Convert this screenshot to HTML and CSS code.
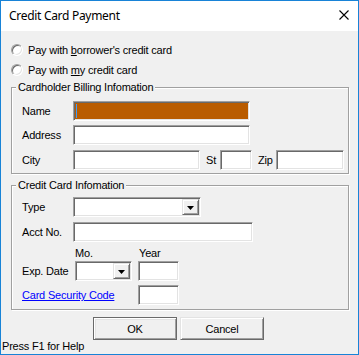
FILE: index.html
```html
<!DOCTYPE html>
<html>
<head>
<meta charset="utf-8">
<link rel="stylesheet" href="styles.css">
</head>
<body>
<div class="win">
  <div class="titlebar">
    <span class="title">Credit Card Payment</span>
    <svg class="close" width="10" height="10" viewBox="0 0 10 10"><path d="M0.5 0.5 L9.5 9.5 M9.5 0.5 L0.5 9.5" stroke="#000" stroke-width="1.1" fill="none"/></svg>
  </div>
  <div class="content">
    <div class="radio-row"><span class="radio"></span><span>Pay with <u>b</u>orrower's credit card</span></div>
    <div class="radio-row"><span class="radio"></span><span>Pay with <u>m</u>y credit card</span></div>

    <div class="group g1">
      <div class="legend">Cardholder Billing Infomation</div>
      <div class="row r-name"><span class="lbl">Name</span><div class="field w-name selected"><span class="caret"></span></div></div>
      <div class="row r-addr"><span class="lbl">Address</span><div class="field w-name"></div></div>
      <div class="row r-city"><span class="lbl">City</span><div class="field w-city"></div><span class="lbl-st">St</span><div class="field w-st"></div><span class="lbl-zip">Zip</span><div class="field w-zip"></div></div>
    </div>

    <div class="group g2">
      <div class="legend">Credit Card Infomation</div>
      <div class="row r-type"><span class="lbl">Type</span><div class="field select w-type"><span class="ddbtn"><svg width="7" height="4" viewBox="0 0 7 4"><polygon points="0,0 7,0 3.5,4" fill="#000"/></svg></span></div></div>
      <div class="row r-acct"><span class="lbl">Acct No.</span><div class="field w-acct"></div></div>
      <div class="sublabels"><span class="lbl-mo">Mo.</span><span>Year</span></div>
      <div class="row r-exp"><span class="lbl-exp">Exp. Date</span><div class="field select w-mo"><span class="ddbtn"><svg width="7" height="4" viewBox="0 0 7 4"><polygon points="0,0 7,0 3.5,4" fill="#000"/></svg></span></div><div class="field w-year"></div></div>
      <div class="row r-csc"><span class="lbl-csc link">Card Security Code</span><div class="field w-year2"></div></div>
    </div>

    <div class="buttons"><button class="btn default">OK</button><button class="btn cancel">Cancel</button></div>
    <div class="status">Press F1 for Help</div>
  </div>
</div>
</body>
</html>
```
FILE: styles.css
```css
html, body {
  margin: 0;
  padding: 0;
  background: #fff;
}
.win {
  box-sizing: border-box;
  width: 359px;
  height: 355px;
  border: 1px solid #1883d7;
  overflow: hidden;
  font-family: "Liberation Sans", Arial, sans-serif;
  font-size: 11px;
  letter-spacing: -0.2px;
  color: #000;
}
.titlebar {
  height: 30px;
  background: #fff;
  display: flex;
  justify-content: space-between;
  align-items: flex-start;
}
.title {
  font-family: "Noto Sans", sans-serif;
  font-size: 12px;
  letter-spacing: -0.3px;
  line-height: 16px;
  margin: 7px 0 0 8px;
}
.close {
  display: block;
  margin: 9px 9px 0 0;
}
.content {
  height: 323px;
  background: #f0f0f0;
  padding-top: 9px;
  box-sizing: border-box;
  overflow: hidden;
}
.radio-row {
  height: 20px;
  display: flex;
  align-items: center;
  padding-left: 10px;
}
.radio {
  box-sizing: border-box;
  width: 12px;
  height: 12px;
  border-radius: 50%;
  background: #fff;
  border: 1px solid;
  border-color: #a0a0a0 #fff #fff #a0a0a0;
  box-shadow: inset 1px 1px 0 #696969, inset -1px -1px 0 #e3e3e3;
  margin-right: 5px;
}
.group {
  box-sizing: border-box;
  margin-left: 10px;
  width: 338px;
  border: 1px solid #a0a0a0;
  box-shadow: inset 1px 1px 0 #fff, 1px 1px 0 #fff;
}
.g1 { margin-top: 7px; height: 87px; }
.g2 { margin-top: 11px; height: 125px; }
.legend {
  display: table;
  margin: -7px 0 0 4px;
  padding: 0 2px;
  line-height: 13px;
  height: 13px;
  background: #f0f0f0;
}
.row {
  height: 20px;
  display: flex;
  align-items: center;
  padding-left: 10px;
}
.lbl { width: 51px; }
.r-name { margin-top: 7px; }
.r-addr { margin-top: 4px; }
.r-city { margin-top: 5px; }
.r-type { margin-top: 5px; }
.r-acct { margin-top: 5px; }
.field {
  box-sizing: border-box;
  height: 20px;
  background: #fff;
  border: 1px solid;
  border-color: #a0a0a0 #fff #fff #a0a0a0;
  box-shadow: inset 1px 1px 0 #696969, inset -1px -1px 0 #e3e3e3;
}
.selected {
  background: #b95c00;
  display: flex;
  align-items: center;
  padding-left: 2px;
}
.caret {
  width: 1px;
  height: 14px;
  background: #3a9cff;
}
.w-name { width: 177px; }
.w-city { width: 127px; }
.lbl-st { width: 14px; margin-left: 6px; }
.w-st { width: 32px; }
.lbl-zip { width: 18px; margin-left: 6px; }
.w-zip { width: 68px; }
.select {
  display: flex;
  justify-content: flex-end;
  padding: 1px;
}
.w-type { width: 128px; }
.ddbtn {
  box-sizing: border-box;
  width: 17px;
  height: 16px;
  background: #f0f0f0;
  border: 1px solid;
  border-color: #e3e3e3 #696969 #696969 #e3e3e3;
  box-shadow: inset 1px 1px 0 #fff, inset -1px -1px 0 #a0a0a0;
  display: flex;
  align-items: center;
  justify-content: center;
}
.ddbtn svg { display: block; margin-top: 1px; }
.w-acct { width: 180px; }
.sublabels {
  margin-top: 4px;
  height: 14px;
  line-height: 14px;
  display: flex;
  padding-left: 63px;
}
.lbl-mo { width: 64px; }
.r-exp { margin-top: 1px; }
.lbl-exp { width: 53px; }
.w-mo { width: 57px; }
.w-year { width: 41px; margin-left: 6px; }
.r-csc { margin-top: 4px; }
.lbl-csc { width: 116px; }
.w-year2 { width: 41px; }
.link {
  color: #0000ff;
  text-decoration: underline;
}
.buttons {
  display: flex;
  margin-top: 7px;
  padding-left: 92px;
  height: 23px;
}
.btn {
  box-sizing: border-box;
  width: 84px;
  height: 23px;
  margin: 0;
  padding: 0;
  font-family: "Liberation Sans", Arial, sans-serif;
  font-size: 11px;
  letter-spacing: -0.2px;
  color: #000;
  background: #f0f0f0;
  border: 1px solid;
  border-color: #e3e3e3 #696969 #696969 #e3e3e3;
  box-shadow: inset 1px 1px 0 #fff, inset -1px -1px 0 #a0a0a0;
}
.default {
  border-color: #696969;
  box-shadow: inset 1px 1px 0 #fff, inset -1px -1px 0 #a0a0a0, inset 2px 2px 0 #e3e3e3;
}
.cancel { margin-left: 3px; }
.status {
  height: 13px;
  line-height: 13px;
  padding-left: 1px;
}
```
